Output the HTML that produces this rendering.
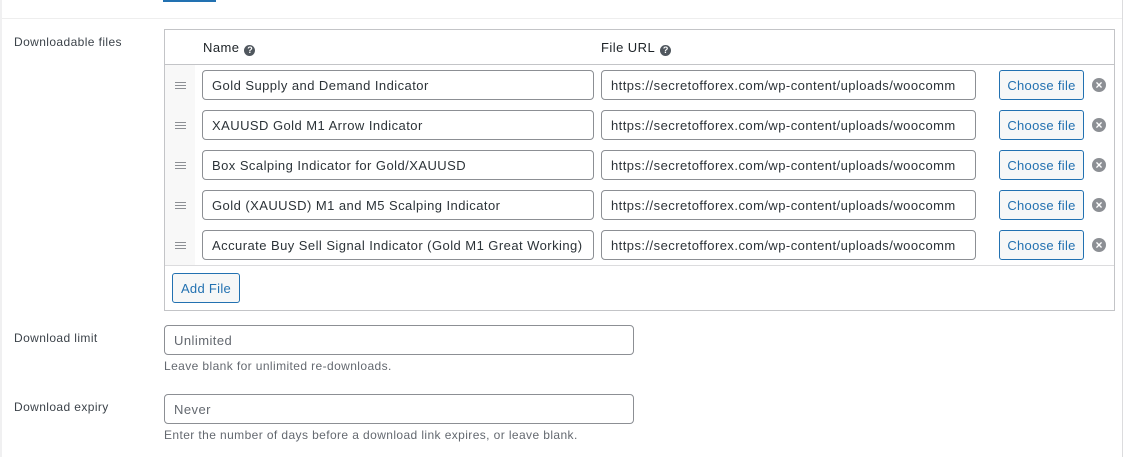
<!DOCTYPE html>
<html><head><style>
*{box-sizing:border-box;margin:0;padding:0}
body{width:1130px;height:457px;background:#fff;font-family:"Liberation Sans",sans-serif;color:#3c434a;position:relative;overflow:hidden;letter-spacing:0.45px}
.a{position:absolute}
.inp{position:absolute;border:1px solid #8c8f94;border-radius:4px;background:#fff;font-size:13px;color:#2c3338;padding-left:9px;padding-top:1px;line-height:28px;height:30px;white-space:nowrap;overflow:hidden}
.btn{position:absolute;border:1px solid #2271b1;border-radius:3px;background:#f6f7f7;color:#2271b1;font-size:13px;text-align:center;line-height:29px;height:30px;letter-spacing:0.3px}
.h{position:absolute;left:175px;width:11px;height:7px;border-top:1px solid #8c8f94;border-bottom:1px solid #8c8f94}
.h:after{content:"";position:absolute;left:0;right:0;top:2px;border-top:1px solid #8c8f94}
.x{position:absolute;left:1092px;width:14px;height:14px;border-radius:50%;background:#8c8f94;color:#fff;font-size:12px;font-weight:bold;line-height:14px;text-align:center;letter-spacing:0}
.q{display:inline-block;width:11px;height:11px;border-radius:50%;background:#50575e;color:#fff;font-size:9px;font-weight:bold;line-height:11px;text-align:center;vertical-align:-1px;margin-left:5px;letter-spacing:0}
.lbl{position:absolute;left:14px;font-size:12px;color:#3c434a;letter-spacing:0.4px}
.help{position:absolute;left:164px;font-size:12px;color:#646970;letter-spacing:0.4px}
</style></head><body>
<div class="a" style="left:0;top:0;width:2px;height:457px;background:#f0f0f1"></div>
<div class="a" style="left:1122px;top:0;width:1px;height:457px;background:#dcdcde"></div>
<div class="a" style="left:2px;top:18px;width:1120px;height:1px;background:#eee"></div>
<div class="a" style="left:163px;top:0;width:53px;height:2px;background:#2271b1"></div>
<div class="lbl" style="top:35px">Downloadable files</div>
<div class="a" style="left:164px;top:29px;width:951px;height:282px;border:1px solid #c3c4c7"></div>
<div class="a" style="left:165px;top:64px;width:949px;height:1px;background:#c3c4c7"></div>
<div class="a" style="left:165px;top:65px;width:30px;height:200px;background:#f8f8f8"></div>
<div class="a" style="left:165px;top:265px;width:949px;height:1px;background:#dcdcde"></div>
<div class="a" style="left:203px;top:40px;font-size:13px;color:#1d2327">Name<span class="q">?</span></div>
<div class="a" style="left:601px;top:40px;font-size:13px;color:#1d2327">File URL<span class="q">?</span></div>

<div class="h" style="top:82px"></div><div class="inp" style="left:202px;top:70px;width:392px">Gold Supply and Demand Indicator</div><div class="inp" style="left:601px;top:70px;width:375px">https://secretofforex.com/wp-content/uploads/woocomm</div><div class="btn" style="left:999px;top:70px;width:85px">Choose file</div><div class="x" style="top:78px">×</div>
<div class="h" style="top:122px"></div><div class="inp" style="left:202px;top:110px;width:392px">XAUUSD Gold M1 Arrow Indicator</div><div class="inp" style="left:601px;top:110px;width:375px">https://secretofforex.com/wp-content/uploads/woocomm</div><div class="btn" style="left:999px;top:110px;width:85px">Choose file</div><div class="x" style="top:118px">×</div>
<div class="h" style="top:162px"></div><div class="inp" style="left:202px;top:150px;width:392px">Box Scalping Indicator for Gold/XAUUSD</div><div class="inp" style="left:601px;top:150px;width:375px">https://secretofforex.com/wp-content/uploads/woocomm</div><div class="btn" style="left:999px;top:150px;width:85px">Choose file</div><div class="x" style="top:158px">×</div>
<div class="h" style="top:202px"></div><div class="inp" style="left:202px;top:190px;width:392px">Gold (XAUUSD) M1 and M5 Scalping Indicator</div><div class="inp" style="left:601px;top:190px;width:375px">https://secretofforex.com/wp-content/uploads/woocomm</div><div class="btn" style="left:999px;top:190px;width:85px">Choose file</div><div class="x" style="top:198px">×</div>
<div class="h" style="top:242px"></div><div class="inp" style="left:202px;top:230px;width:392px">Accurate Buy Sell Signal Indicator (Gold M1 Great Working)</div><div class="inp" style="left:601px;top:230px;width:375px">https://secretofforex.com/wp-content/uploads/woocomm</div><div class="btn" style="left:999px;top:230px;width:85px">Choose file</div><div class="x" style="top:238px">×</div>

<div class="btn" style="left:172px;top:273px;width:68px">Add File</div>

<div class="lbl" style="top:331px">Download limit</div>
<div class="inp" style="left:164px;top:325px;width:470px;color:#646970">Unlimited</div>
<div class="help" style="top:359px">Leave blank for unlimited re-downloads.</div>
<div class="lbl" style="top:400px">Download expiry</div>
<div class="inp" style="left:164px;top:394px;width:470px;color:#646970">Never</div>
<div class="help" style="top:428px">Enter the number of days before a download link expires, or leave blank.</div>
</body></html>
